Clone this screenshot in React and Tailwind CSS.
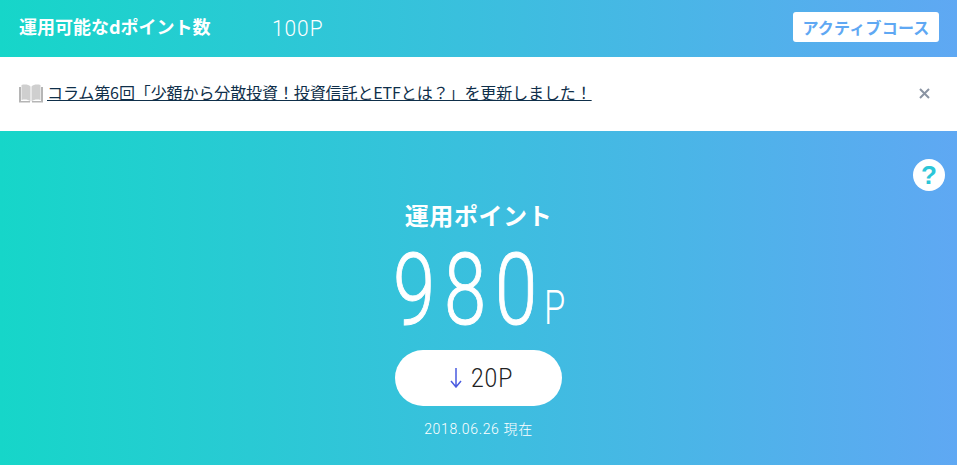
const jp = { fontFamily: '"Noto Sans CJK JP", sans-serif' };
const num = { fontFamily: 'Roboto, "Noto Sans CJK JP", sans-serif' };

function Book() {
  return (
    <svg width="24" height="19" viewBox="0 0 24 19" className="shrink-0 mt-[2px]">
      <path d="M0 3h2v14h9v1.5H0z" fill="#b5b5b5" />
      <path d="M24 3h-2v14h-9v1.5h11z" fill="#b5b5b5" />
      <path d="M2.5 1C6 0 9.5 .5 11.5 2.5V17.5C9 15.5 6 15 2.5 16z" fill="#cfcfcf" />
      <path d="M21.5 1C18 0 14.5 .5 12.5 2.5V17.5C15 15.5 18 15 21.5 16z" fill="#cfcfcf" />
    </svg>
  );
}

export default function App() {
  return (
    <div className="w-[957px] h-[465px] overflow-hidden bg-white" style={jp}>
      <header className="h-[57px] bg-linear-to-r/srgb from-[#16d6c9] to-[#5fa8f3] flex items-center pl-[19px] pr-[18px] text-white">
        <span className="w-[253px] text-[18px] leading-none font-bold -mt-[6px] whitespace-nowrap">運用可能なdポイント数</span>
        <span className="w-[52px] inline-block origin-left scale-x-[0.95] text-[22px] leading-none font-light tracking-[1px]" style={num}>100P</span>
        <button className="ml-auto h-[30px] -mt-[3px] w-[146px] bg-white rounded-[3px] text-[#5fa8f3] text-[16px] font-bold leading-none tracking-[0.2px]">アクティブコース</button>
      </header>
      <div className="h-[74px] flex items-start pt-[25px] pl-[19px] pr-[27px]">
        <Book />
        <a className="ml-[4px] text-[16px] leading-[20px] text-[#0f2f4a] underline decoration-[#0f2f4a] whitespace-nowrap tracking-[-0.1px]">コラム第6回「少額から分散投資！投資信託とETFとは？」を更新しました！</a>
        <svg width="11" height="11" viewBox="0 0 11 11" className="ml-auto mt-[6px]">
          <path d="M1 1l9 9M10 1l-9 9" stroke="#8a94a3" strokeWidth="2" />
        </svg>
      </div>
      <main className="relative h-[334px] bg-linear-to-r/srgb from-[#16d6c9] to-[#5fa8f3] flex flex-col items-center text-white">
        <div className="absolute right-[12px] top-[28px] w-[32px] h-[32px] rounded-full bg-white flex items-center justify-center text-[26px] font-bold text-[#2cc6d8] leading-none" style={{ fontFamily: '"Liberation Sans", sans-serif' }}>?</div>
        <h2 className="mt-[70px] text-[24px] leading-[28px] font-bold tracking-[0.6px]">運用ポイント</h2>
        <div className="mt-[11px] flex items-baseline h-[100px] w-[171px]" style={num}>
          <span className="w-[151px] shrink-0 inline-block origin-left scale-x-[0.76] text-[100px] leading-[100px] font-light whitespace-nowrap [-webkit-text-stroke:1px_#fff]">
            <span className="tracking-[11.7px]">98</span>0
          </span>
          <span className="w-[20px] shrink-0 inline-block origin-left scale-x-[0.72] text-[48px] leading-none font-light">P</span>
        </div>
        <div className="mt-[10px] w-[167px] h-[56px] rounded-full bg-white flex items-center justify-center gap-[9px] pl-[7px]">
          <svg width="12" height="20" viewBox="0 0 12 20">
            <path d="M6 0v19M1 13l5 6 5-6" stroke="#4a5be0" strokeWidth="1.5" fill="none" />
          </svg>
          <span className="w-[44px] inline-block origin-left scale-x-[0.88] text-[#222] text-[26px] leading-none font-light tracking-[1px] whitespace-nowrap" style={num}>20P</span>
        </div>
        <p className="mt-[13px] text-[14px] leading-[20px] tracking-[0.65px] font-light" style={num}>2018.06.26 現在</p>
      </main>
    </div>
  );
}
